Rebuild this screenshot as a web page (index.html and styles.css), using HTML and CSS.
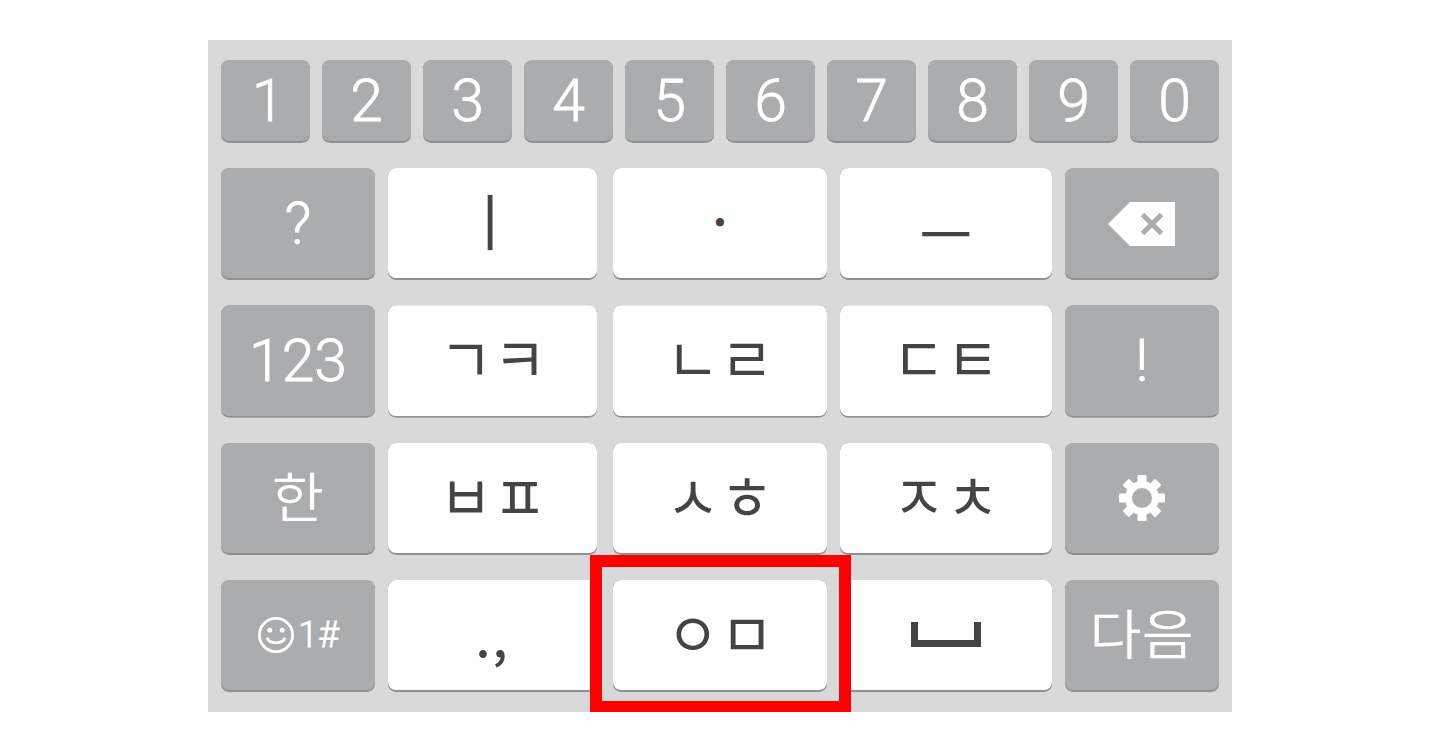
FILE: index.html
```html
<!DOCTYPE html>
<html lang="ko">
<head>
  <meta charset="UTF-8">
  <title>Keyboard</title>
  <link rel="stylesheet" href="styles.css">
</head>
<body>
  <div class="keyboard">
    <div class="row numbers">
      <div class="key fn"><span class="one">1</span></div>
      <div class="key fn">2</div>
      <div class="key fn">3</div>
      <div class="key fn">4</div>
      <div class="key fn">5</div>
      <div class="key fn">6</div>
      <div class="key fn">7</div>
      <div class="key fn">8</div>
      <div class="key fn">9</div>
      <div class="key fn">0</div>
    </div>

    <div class="row">
      <div class="key fn side">?</div>
      <div class="key letter c1"><span class="jamo bar">ㅣ</span></div>
      <div class="key letter c2"><span class="dot">·</span></div>
      <div class="key letter c3"><span class="jamo low">ㅡ</span></div>
      <div class="key fn side">
        <svg class="icon backspace" width="68" height="44" viewBox="0 0 68 44">
          <path d="M0 22 L22 0 H67 V44 H22 Z" fill="#fff"/>
          <path d="M34.500 12.500 L53.500 31.500 M53.500 12.500 L34.500 31.500" stroke="#abacae" stroke-width="5"/>
        </svg>
      </div>
    </div>

    <div class="row">
      <div class="key fn side">123</div>
      <div class="key letter c1"><span class="jamo">ㄱ</span><span class="jamo">ㅋ</span></div>
      <div class="key letter c2"><span class="jamo">ㄴ</span><span class="jamo">ㄹ</span></div>
      <div class="key letter c3"><span class="jamo">ㄷ</span><span class="jamo">ㅌ</span></div>
      <div class="key fn side">!</div>
    </div>

    <div class="row">
      <div class="key fn side"><span class="hangul">한</span></div>
      <div class="key letter c1"><span class="jamo">ㅂ</span><span class="jamo">ㅍ</span></div>
      <div class="key letter c2"><span class="jamo">ㅅ</span><span class="jamo">ㅎ</span></div>
      <div class="key letter c3"><span class="jamo">ㅈ</span><span class="jamo">ㅊ</span></div>
      <div class="key fn side">
        <svg class="icon" width="46" height="46" viewBox="-23 -23 46 46">
          <g fill="#fff">
            <rect x="-4.500" y="-23" width="9" height="9" rx="1"/>
            <rect x="-4.500" y="-23" width="9" height="9" rx="1" transform="rotate(45)"/>
            <rect x="-4.500" y="-23" width="9" height="9" rx="1" transform="rotate(90)"/>
            <rect x="-4.500" y="-23" width="9" height="9" rx="1" transform="rotate(135)"/>
            <rect x="-4.500" y="-23" width="9" height="9" rx="1" transform="rotate(180)"/>
            <rect x="-4.500" y="-23" width="9" height="9" rx="1" transform="rotate(225)"/>
            <rect x="-4.500" y="-23" width="9" height="9" rx="1" transform="rotate(270)"/>
            <rect x="-4.500" y="-23" width="9" height="9" rx="1" transform="rotate(315)"/>
          </g>
          <circle r="13.500" fill="none" stroke="#fff" stroke-width="7"/>
        </svg>
      </div>
    </div>

    <div class="row">
      <div class="key fn side emoji">
        <svg class="icon" width="38" height="38" viewBox="0 0 40 40">
          <circle cx="20" cy="20" r="17.500" fill="none" stroke="#fff" stroke-width="3"/>
          <circle cx="13.500" cy="15" r="2.600" fill="#fff"/>
          <circle cx="26.500" cy="15" r="2.600" fill="#fff"/>
          <path d="M10.500 23 C13 30 27 30 29.500 23" fill="none" stroke="#fff" stroke-width="3"/>
        </svg>
        <span>1#</span>
      </div>
      <div class="key letter c1"><span class="punct">.,</span></div>
      <div class="key letter c2"><span class="jamo">ㅇ</span><span class="jamo">ㅁ</span></div>
      <div class="key letter c3">
        <svg class="icon" width="70" height="26" viewBox="0 0 70 26">
          <path d="M3.500 0 V21.500 H66.500 V0" fill="none" stroke="#444" stroke-width="7"/>
        </svg>
      </div>
      <div class="key fn side"><span class="hangul">다음</span></div>
    </div>

    <div class="highlight"></div>
  </div>
</body>
</html>
```

FILE: styles.css
```css
body {
  margin: 0;
  padding-top: 40px;
  background: #fff;
  font-family: 'Roboto', 'Noto Sans CJK KR', sans-serif;
}
.keyboard {
  position: relative;
  box-sizing: border-box;
  width: 1024px;
  height: 672px;
  margin: 0 auto;
  padding: 20px 13px 0;
  background: #d9d9d9;
  display: flex;
  flex-direction: column;
  gap: 27px;
}
.row {
  display: flex;
  gap: 13px;
  height: 110.33px;
}
.numbers {
  gap: 12px;
  height: 81px;
}
.key {
  display: flex;
  align-items: center;
  justify-content: center;
  border-radius: 8px;
}
.fn {
  flex: 1;
  background: #abacae;
  box-shadow: 0 1px 0 1px #8f9091;
  clip-path: inset(0 0 -2px 0 round 8px);
  color: #fff;
  font-size: 59px;
  font-weight: 300;
  -webkit-text-stroke: 0.8px #fff;
}
.side {
  flex: none;
  width: 154px;
}
.one {
  margin-left: 5px;
}
.letter {
  background: #fff;
  box-shadow: 0 1px 0 1px #8f9091;
  clip-path: inset(0 0 -2px 0 round 8px);
  color: #444;
  gap: 4px;
  font-family: 'Noto Sans CJK KR', sans-serif;
}
.c1 {
  width: 209px;
  margin-right: 3px;
}
.c2 {
  width: 214px;
}
.c3 {
  width: 212px;
}
.jamo {
  display: block;
  font-size: 54px;
  line-height: 1;
  transform: translateY(-3px) scale(1.07, 1.15);
}
.bar {
  margin-left: -6px;
}
.low {
  position: relative;
  top: 13px;
}
.dot {
  font-size: 44px;
  font-weight: 700;
  line-height: 1;
  margin-top: -6px;
}
.punct {
  font-size: 50px;
  font-weight: 500;
  letter-spacing: 2px;
  line-height: 1;
  margin-top: 2px;
}
.hangul {
  display: block;
  font-family: 'Noto Sans CJK KR', sans-serif;
  font-size: 54px;
  font-weight: 350;
  line-height: 1;
  -webkit-text-stroke: 0;
  transform: translateY(-3px) scaleX(1.05);
}
.emoji {
  gap: 3px;
  font-size: 36px;
}
.icon {
  display: block;
}
.backspace {
  margin-top: 2px;
}
.highlight {
  position: absolute;
  left: 382px;
  top: 515px;
  width: 237px;
  height: 134px;
  border: 12px solid #f00;
}
```
